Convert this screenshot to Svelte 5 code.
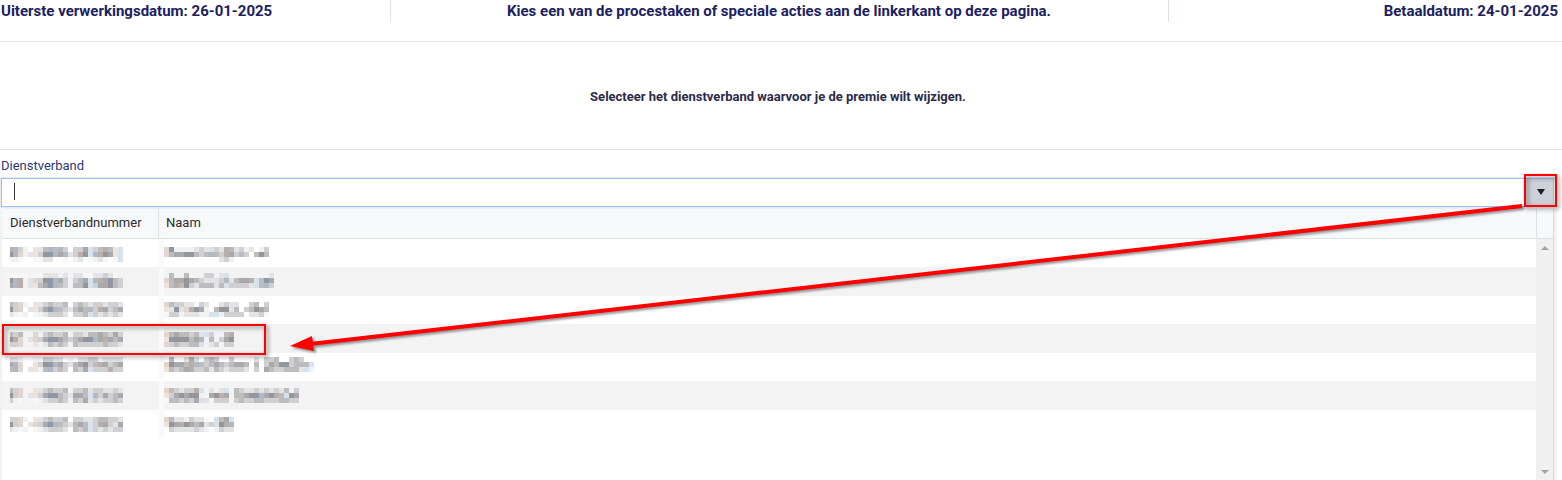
<script>
let query = $state('')
let open = $state(true)

// tints used by the blurred cells, one letter per block
const tints = {
  a: '#969597',
  b: '#a9a8aa',
  c: '#bcbcbf',
  d: '#d0d0d2',
  e: '#e1e3e5',
  f: '#eef2f4',
  g: '#d7e3ec',
  h: '#f0e4da',
  i: '#8f98a6',
  j: '#b0b8c3',
  k: '#b9aea9',
  m: '#e2d5cd',
  n: '#f6f7f8',
}

const rows = [
  {
    top: 8,
    nr: ['kjdf.hecjcjd.ddbgdckchg', 'ajmfehdaijbjedkagjkabhg', 'ffn..nnee..n.fe.nfen.ng'],
    name: ['miffffedegdekjedfh.fd', 'mcbbaacdcjcdkbdcd.cac', '...........edf.......'],
  },
  {
    top: 5,
    nr: ['nnnn.nneeefe.eenneeden.', 'ajkfemdaijbd.dcbgjkbicd', 'bjkfehcbijcdfccagdbbacd'],
    name: ['.c..c...dd.eg........e', 'mcbbabcdeeedjecbbkgcib', 'hckcadecccecgddddegcjd'],
  },
  {
    top: 6,
    nr: ['cdmf.hedcddc.dcdeddedde', 'adm.ehdbijcdecbcjdkbdcb', 'efnf.nfeddde.ddcgdedede'],
    name: ['mcddeende..edee..dc.d', 'heiemkibf.caaec.dcabc', 'nddfeeeffggfdddd.eedn'],
  },
  {
    top: 7,
    nr: ['cdcf.mfdcddc.ddeccbcdbd', 'akm.emdbiabcdcbaijbkbcb', 'ddmf.hfecdcd.cdddddcdde'],
    name: ['mcbccdcegdf.ck', 'hiaaacbj.c.dba', 'mdcddccgfed.dd'],
  },
  {
    top: 4,
    nr: ['eef..nnddee.n.eeddfeeee', 'bjm..hdaijbdecbadckbdcb', 'cjm.ehfcjdcd.cdbgdddkdd'],
    name: ['.c..ekg.dcd..d....e.ddc..dcd..', 'mabbckjcdcbcdcbbc.c.dbcaidcccg', 'hcdcbkddcecdeddde.d.bcddcccegf'],
  },
  {
    top: 6,
    nr: ['cdmf.hedcddc.ddceddeede', 'adm.ehdbiacdebbcgjdbdcb', 'dfnf.nfeddcd.cdbededdcd'],
    name: ['mcdeddkg.efeg.cdeedededec.d', 'hdbabaaf.bakb.ccbaijbakcgab', 'nccdcdbge.ddd.dcddccdddccdd'],
  },
  {
    top: 7,
    nr: ['ddmf.hedcddc.ddeedccdde', 'adm.emdbijcdecbcgdkbdeb', 'efnf.nfeddde.cdcgdededd'],
    name: ['mceefdeen.gcbg', 'habkabcbedgakj', '.deeeedef.fdee'],
  },
]

// the first block of the number column is clipped to 3px
const blocks = (lines, top, first) =>
  lines.flatMap((line, y) =>
    [...line].map((tint, x) => ({
      x: x === 0 ? 0 : first + (x - 1) * 5,
      y: top + y * 5,
      width: x === 0 ? first : 5,
      fill: tints[tint],
    }))
  ).filter((block) => block.fill)
</script>

{#snippet blurred(lines, top, first, width)}
  <svg {width} height="28" aria-hidden="true" shape-rendering="crispEdges">
    {#each blocks(lines, top, first) as block}
      <rect x={block.x} y={block.y} width={block.width} height="5" fill={block.fill} />
    {/each}
  </svg>
{/snippet}

<header>
  <div class="start">Uiterste verwerkingsdatum: 26-01-2025</div>
  <div class="info">Kies een van de procestaken of speciale acties aan de linkerkant op deze pagina.</div>
  <div class="end">Betaaldatum: 24-01-2025</div>
</header>

<h1>Selecteer het dienstverband waarvoor je de premie wilt wijzigen.</h1>

<main>
  <label for="dienstverband">Dienstverband</label>
  <div class="field">
    <div class="combo">
      <input id="dienstverband" type="text" autocomplete="off" bind:value={query}>
      <span class="caret"></span>
      <div class="trigger">
        <button type="button" aria-label="Toon dienstverbanden" onclick={() => open = !open}>
          <svg width="8" height="6" viewBox="0 0 8 6"><path d="M0 0h8L4 6z" fill="#1b1b1f" /></svg>
        </button>
        <span class="mark mark-trigger"></span>
      </div>
    </div>

    {#if open}
      <div class="popup">
        <table>
          <thead>
            <tr>
              <th class="nr">Dienstverbandnummer</th>
              <th>Naam</th>
            </tr>
          </thead>
          <tbody>
            {#each rows as row}
              <tr>
                <td>{@render blurred(row.nr, row.top, 3, 113)}</td>
                <td>{@render blurred(row.name, row.top, 5, 150)}</td>
              </tr>
            {/each}
          </tbody>
        </table>
        <div class="side">
          <div class="corner"></div>
          <div class="scrollbar">
            <button type="button" aria-label="Omhoog">
              <svg width="8" height="4" viewBox="0 0 8 4"><path d="M4 0l4 4H0z" fill="#a3a3a3" /></svg>
            </button>
            <button type="button" aria-label="Omlaag">
              <svg width="8" height="4" viewBox="0 0 8 4"><path d="M0 0h8L4 4z" fill="#a3a3a3" /></svg>
            </button>
          </div>
        </div>
      </div>
      <span class="mark mark-row"></span>
      <svg class="arrow" height="160" aria-hidden="true">
        <line x1="20" y1="148" x2="100%" y2="10" stroke="#f00" stroke-width="4" />
        <path d="M0 150L22 140L24 155z" fill="#f00" />
      </svg>
    {/if}
  </div>
</main>

<style>
:global(body) {
  margin: 0;
  background: #fff;
  font-family: Roboto, "Liberation Sans", sans-serif;
  font-size: 13px;
  overflow: hidden;
}
header {
  display: grid;
  grid-template-columns: 1fr 2fr 1fr;
  height: 22px;
  padding: 0 4px 19px 0;
  border-bottom: 1px solid #e1e3e5;
  color: #1c2260;
  font-size: 15px;
  font-weight: 700;
  line-height: 22px;
  white-space: nowrap;
}
.start {
  padding-left: 1px;
}
.info {
  border: solid #d9e2ee;
  border-width: 0 1px;
  text-align: center;
}
.end {
  text-align: right;
}
h1 {
  margin: 0;
  padding: 45px 6px 42px 0;
  border-bottom: 1px solid #e3e5e7;
  color: #2c2c48;
  font-size: 13px;
  font-weight: 700;
  line-height: 20px;
  text-align: center;
}
main {
  padding: 6px 8px 0 1px;
}
label {
  display: block;
  height: 22px;
  color: #2d3a78;
  line-height: 20px;
}
.field {
  position: relative;
}
.combo {
  position: relative;
  display: flex;
  height: 27px;
  border: 1px solid #a0c0f5;
  box-shadow: 0 0 0 1px #e6e9ee;
}
input {
  flex: 1;
  min-width: 0;
  padding: 0 12px;
  border: 0;
  outline: 0;
  font: inherit;
}
.caret {
  position: absolute;
  top: 4px;
  left: 12px;
  width: 1px;
  height: 17px;
  background: #333;
}
.trigger {
  position: relative;
  display: flex;
  width: 28px;
}
button {
  display: flex;
  align-items: center;
  justify-content: center;
  padding: 0;
  border: 0;
}
.trigger button {
  flex: 1;
  padding: 0 0 2px 4px;
  background: #cdd0d9;
}
.popup {
  display: grid;
  grid-template-columns: 1fr 17px;
  margin: 2px 0 0 1px;
  border-right: 1px solid #d8d9da;
  box-shadow: 0 0 5px 1px #e2e2e4;
  background: #fff;
}
table {
  align-self: start;
  width: 100%;
  border-collapse: separate;
  border-spacing: 0;
  table-layout: fixed;
}
th {
  box-sizing: border-box;
  height: 30px;
  padding: 0 7px 2px;
  border-bottom: 1px solid #dfe1e3;
  background: #f7f8fa;
  color: #2b2b2f;
  font-weight: 400;
  line-height: 20px;
  text-align: left;
}
.nr {
  width: 157px;
  padding-left: 8px;
  border-right: 1px solid #dfe1e3;
}
td {
  height: 28px;
  padding: 0 0 0 8px;
}
td + td {
  padding-left: 0;
  border-left: 5px solid #f9f9f9;
}
tbody tr:nth-child(even) td {
  height: 29px;
  background-color: #f3f3f3;
}
td svg {
  display: block;
}
.side {
  display: flex;
  flex-direction: column;
}
.corner {
  box-sizing: border-box;
  height: 30px;
  border-bottom: 1px solid #dfe1e3;
  border-left: 1px solid #dfe1e3;
  background: #f7f8fa;
}
.scrollbar {
  display: flex;
  flex-direction: column;
  justify-content: space-between;
  height: 241px;
  background: #f0f0f0;
}
.scrollbar button {
  height: 17px;
  background: none;
}
.mark {
  position: absolute;
  border: 2px solid #f00;
  filter: drop-shadow(2px 2px 2px rgba(0, 0, 0, 0.5));
  pointer-events: none;
}
.mark-trigger {
  inset: -5px -4px -1px -1px;
}
.mark-row {
  top: 146px;
  left: 1px;
  width: 260px;
  height: 27px;
}
.arrow {
  position: absolute;
  top: 18px;
  left: 289px;
  width: calc(100% - 321px);
  overflow: visible;
  filter: drop-shadow(2px 2px 1px rgba(0, 0, 0, 0.4));
  pointer-events: none;
}
</style>
